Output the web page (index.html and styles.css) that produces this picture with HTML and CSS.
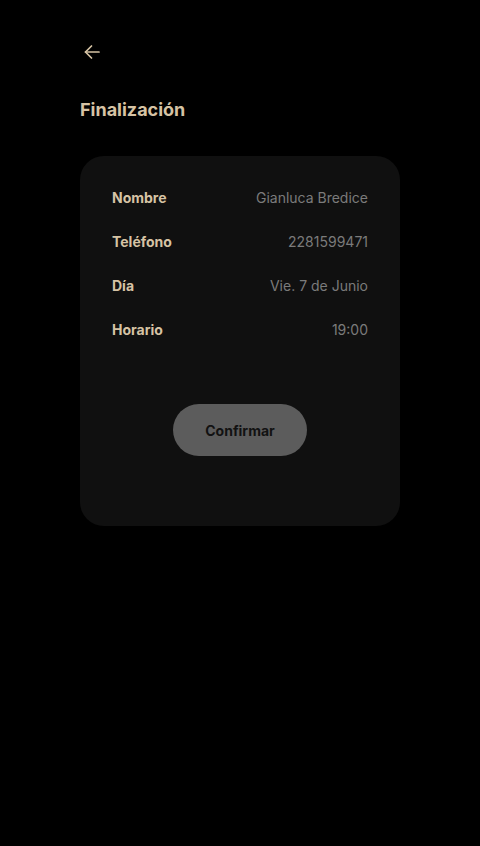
FILE: index.html
```html
<!DOCTYPE html>
<html lang="es">
<head>
<meta charset="utf-8">
<link rel="stylesheet" href="styles.css">
</head>
<body>
<main class="page">
  <button class="back" aria-label="Volver">
    <svg width="20" height="20" viewBox="0 0 20 20" fill="none" stroke="currentColor" stroke-width="1.7" stroke-linecap="round" stroke-linejoin="round">
      <path d="M17 10H3.5"/>
      <path d="M9.5 4L3.5 10L9.5 16"/>
    </svg>
  </button>
  <h1 class="title">Finalización</h1>
  <section class="card">
    <div class="rows">
      <div class="row"><span class="label">Nombre</span><span class="value">Gianluca Bredice</span></div>
      <div class="row"><span class="label">Teléfono</span><span class="value">2281599471</span></div>
      <div class="row"><span class="label">Día</span><span class="value">Vie. 7 de Junio</span></div>
      <div class="row"><span class="label">Horario</span><span class="value">19:00</span></div>
    </div>
    <div class="actions">
      <button class="confirm">Confirmar</button>
    </div>
  </section>
</main>
</body>
</html>
```

FILE: styles.css
```css
* { box-sizing: border-box; }
html, body { margin: 0; padding: 0; background: #000; }
body {
  font-family: Inter, "Noto Sans", sans-serif;
  color: #d6c3a4;
  width: 480px;
  height: 846px;
}
.page {
  padding: 42px 80px 0;
  display: flex;
  flex-direction: column;
}
.back {
  background: none;
  border: 0;
  padding: 0;
  margin-left: 2px;
  width: 20px;
  height: 20px;
  color: #d6c3a4;
  display: flex;
}
.title {
  margin: 36px 0 0;
  font-size: 18px;
  font-weight: 700;
  line-height: 24px;
  color: #d6c3a4;
}
.card {
  margin-top: 34px;
  background: #101010;
  border-radius: 24px;
  padding: 19px 32px 70px;
}
.rows { display: flex; flex-direction: column; }
.row {
  height: 44px;
  display: flex;
  align-items: center;
  justify-content: space-between;
  font-size: 14px;
}
.label { font-weight: 700; color: #d6c3a4; }
.value { color: #7b7b7b; }
.actions {
  margin-top: 53px;
  display: flex;
  justify-content: center;
}
.confirm {
  width: 134px;
  height: 52px;
  border: 0;
  border-radius: 26px;
  background: #5c5c5c;
  color: #121212;
  font-family: Inter, "Noto Sans", sans-serif;
  font-size: 14px;
  font-weight: 700;
}
```
